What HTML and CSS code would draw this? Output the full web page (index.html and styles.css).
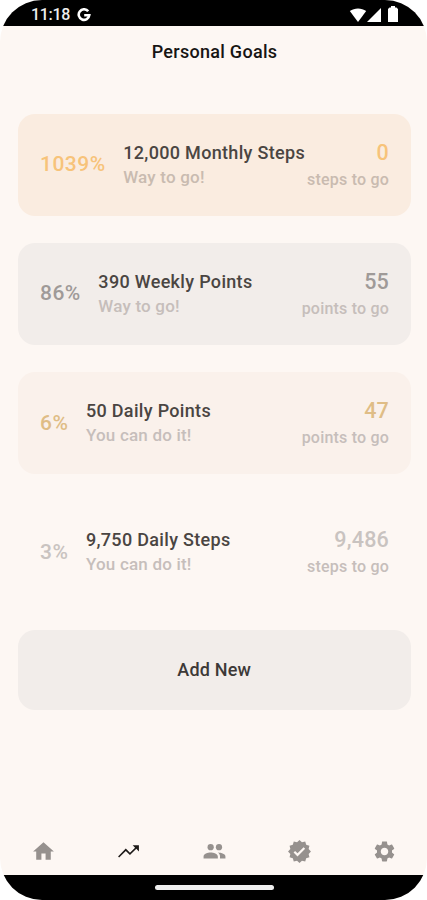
FILE: index.html
```html
<!DOCTYPE html>
<html lang="en">
<head>
<meta charset="utf-8">
<title>Personal Goals</title>
<link rel="stylesheet" href="styles.css">
</head>
<body>
<div class="screen">
  <header class="status">
    <div class="status-left">
      <span class="clock">11:18</span>
      <svg class="google" viewBox="0 0 14 14"><path d="M11.2 3.3A5.3 5.3 0 1 0 12.3 7.2H7.2" fill="none" stroke="#fff" stroke-width="2.6"/></svg>
    </div>
    <div class="status-right">
      <svg width="18" height="14" viewBox="0 0 18 14"><path d="M.8 3.1C5.5-.4 12.5-.4 17.2 3.1L9 14z"/></svg>
      <svg width="14" height="14" viewBox="0 0 14 14"><path d="M14 0v14H0z"/></svg>
      <svg class="battery" width="10" height="16" viewBox="0 0 10 16"><path d="M3 0h4v1.5h1.5L10 3v13H0V3l1.5-1.5H3z"/></svg>
    </div>
  </header>
  <h1 class="title">Personal Goals</h1>
  <main class="goals">
    <section class="card peach">
      <div class="percent">1039%</div>
      <div class="info"><div class="name">12,000 Monthly Steps</div><div class="note">Way to go!</div></div>
      <div class="left"><div class="count">0</div><div class="unit">steps to go</div></div>
    </section>
    <section class="card gray">
      <div class="percent">86%</div>
      <div class="info"><div class="name">390 Weekly Points</div><div class="note">Way to go!</div></div>
      <div class="left"><div class="count">55</div><div class="unit">points to go</div></div>
    </section>
    <section class="card blush">
      <div class="percent">6%</div>
      <div class="info"><div class="name">50 Daily Points</div><div class="note">You can do it!</div></div>
      <div class="left"><div class="count">47</div><div class="unit">points to go</div></div>
    </section>
    <section class="card plain">
      <div class="percent">3%</div>
      <div class="info"><div class="name">9,750 Daily Steps</div><div class="note">You can do it!</div></div>
      <div class="left"><div class="count">9,486</div><div class="unit">steps to go</div></div>
    </section>
    <button class="add">Add New</button>
  </main>
  <nav class="tabs">
    <a><svg viewBox="0 0 24 24"><path d="M10 20v-6h4v6h5v-8h3L12 3 2 12h3v8z"/></svg></a>
    <a class="active"><svg viewBox="0 0 24 24"><path d="M16 6l2.300 2.300-4.900 4.900-4-4L2 16.800 3 17.800l6.400-6.400 4 4 6.100-6.000L22 12V6z"/></svg></a>
    <a><svg viewBox="0 0 24 24"><circle cx="8.300" cy="7.800" r="3"/><circle cx="16.300" cy="7.800" r="3"/><path d="M8.300 12.900C5.500 12.900 1.500 14.200 1.500 16.800V18.700H15.200V16.800C15.200 14.200 11.100 12.900 8.300 12.900zM15.200 13C16.600 14 17.300 15.200 17.300 16.800V18.700H22.500V16.800C22.500 14.500 19 13.200 15.200 13z"/></svg></a>
    <a><svg viewBox="0 0 24 24"><path d="M12 1L14.350 3.230 17.500 2.470 18.420 5.580 21.530 6.500 20.770 9.650 23 12 20.770 14.350 21.530 17.500 18.420 18.420 17.500 21.530 14.350 20.770 12 23 9.650 20.770 6.500 21.530 5.580 18.420 2.470 17.500 3.230 14.350 1 12 3.230 9.650 2.470 6.500 5.580 5.580 6.500 2.470 9.650 3.230zM10.090 16.720L17.420 9.370 15.940 7.890 10.090 13.760 7.770 11.430 6.290 12.910z"/></svg></a>
    <a><svg viewBox="0 0 24 24"><path d="M19.140 12.940c.04-.3.060-.61.060-.94 0-.32-.02-.64-.07-.94l2.030-1.580c.18-.14.230-.41.120-.61l-1.920-3.320c-.12-.22-.37-.29-.59-.22l-2.390.96c-.5-.38-1.030-.7-1.620-.94l-.36-2.540c-.04-.24-.24-.41-.48-.41h-3.840c-.24 0-.43.170-.47.410l-.36 2.540c-.59.240-1.130.57-1.620.94l-2.390-.96c-.22-.08-.47 0-.59.220L2.740 8.870c-.12.210-.08.470.12.610l2.030 1.580c-.05.300-.09.630-.09.940s.02.640.07.940l-2.030 1.580c-.18.140-.23.410-.12.610l1.920 3.320c.12.220.37.290.59.220l2.390-.96c.5.380 1.030.7 1.620.94l.36 2.540c.05.240.24.410.48.410h3.840c.24 0 .44-.17.470-.41l.36-2.540c.59-.24 1.130-.56 1.620-.94l2.390.96c.22.080.47 0 .59-.22l1.920-3.320c.12-.22.070-.47-.12-.61l-2.010-1.580zM12 15.600c-1.980 0-3.600-1.620-3.600-3.600s1.620-3.600 3.600-3.600 3.600 1.620 3.600 3.600-1.620 3.600-3.600 3.600z"/></svg></a>
  </nav>
  <footer class="gesture"><div class="handle"></div></footer>
</div>
</body>
</html>
```
FILE: styles.css
```css
* { box-sizing: border-box; }
body { margin: 0; background: #fff; font-family: Roboto, sans-serif; font-weight: 500; }
.screen {
  width: 427px; height: 900px; border-radius: 42px; overflow: hidden;
  background: #fdf7f3; display: flex; flex-direction: column;
}
.status {
  height: 25.5px; flex: none; background: #000; display: flex;
  justify-content: space-between; padding: 0 29px 0 31px;
}
.status-left { display: flex; align-items: center; gap: 7px; padding-top: 4px; }
.clock { color: #eee; font-size: 16px; line-height: 20px; letter-spacing: -.3px; }
.google { width: 14px; height: 14px; }
.status-right { display: flex; align-items: flex-end; fill: #fff; padding-bottom: 4px; }
.battery { margin-left: 7px; }
.title {
  margin: 15.5px 0 0; padding: 0 0 1px 2px; text-align: center; font-size: 18px; line-height: 21px;
  font-weight: 500; color: #171513; letter-spacing: .28px;
}
.goals { display: flex; flex-direction: column; gap: 26.7px; padding: 50.5px 16.5px 0 18px; }
.card {
  height: 102.5px; border-radius: 17px; padding: 0 21.5px 0 22px; display: flex;
  align-items: center; white-space: nowrap;
}
.percent { font-size: 21px; line-height: 24px; letter-spacing: .5px; margin-right: 17.5px; padding-bottom: 1px; }
.info { flex: 1; }
.name { font-size: 18px; line-height: 24px; color: #4a4542; letter-spacing: .32px; }
.note { font-size: 17px; line-height: 24px; color: #c6bebb; letter-spacing: .2px; }
.left { text-align: right; padding-top: 1.5px; }
.count { font-size: 21.5px; line-height: 28px; letter-spacing: .2px; }
.unit { font-size: 16px; line-height: 26px; color: #c6bebb; letter-spacing: .2px; }
.peach { background: #faece0; color: #f7c37a; }
.peach .note, .peach .unit { color: #c9bbb0; }
.gray { background: #f2edea; color: #9f9a98; }
.blush { background: #faf1eb; color: #dfbd86; }
.plain { color: #c9c3c0; }
.add {
  height: 79.5px; border: 0; border-radius: 17px; background: #f2edea; padding-bottom: 3px;
  font: 500 18px Roboto, sans-serif; color: #3d3937; letter-spacing: .2px;
}
.tabs { margin-top: auto; height: 48px; display: flex; flex: none; padding-left: 1px; }
.tabs a { flex: 1; display: flex; justify-content: center; }
.tabs svg { width: 25px; height: 25px; margin-top: 12px; fill: #96918e; }
.tabs .active svg { fill: #1d1a18; }
.gesture {
  flex: none; height: 25.5px; background: #000; display: flex;
  justify-content: center; padding-top: 10px;
}
.handle { width: 119px; height: 5px; border-radius: 3px; background: #eee; margin-left: 1px; }
```
